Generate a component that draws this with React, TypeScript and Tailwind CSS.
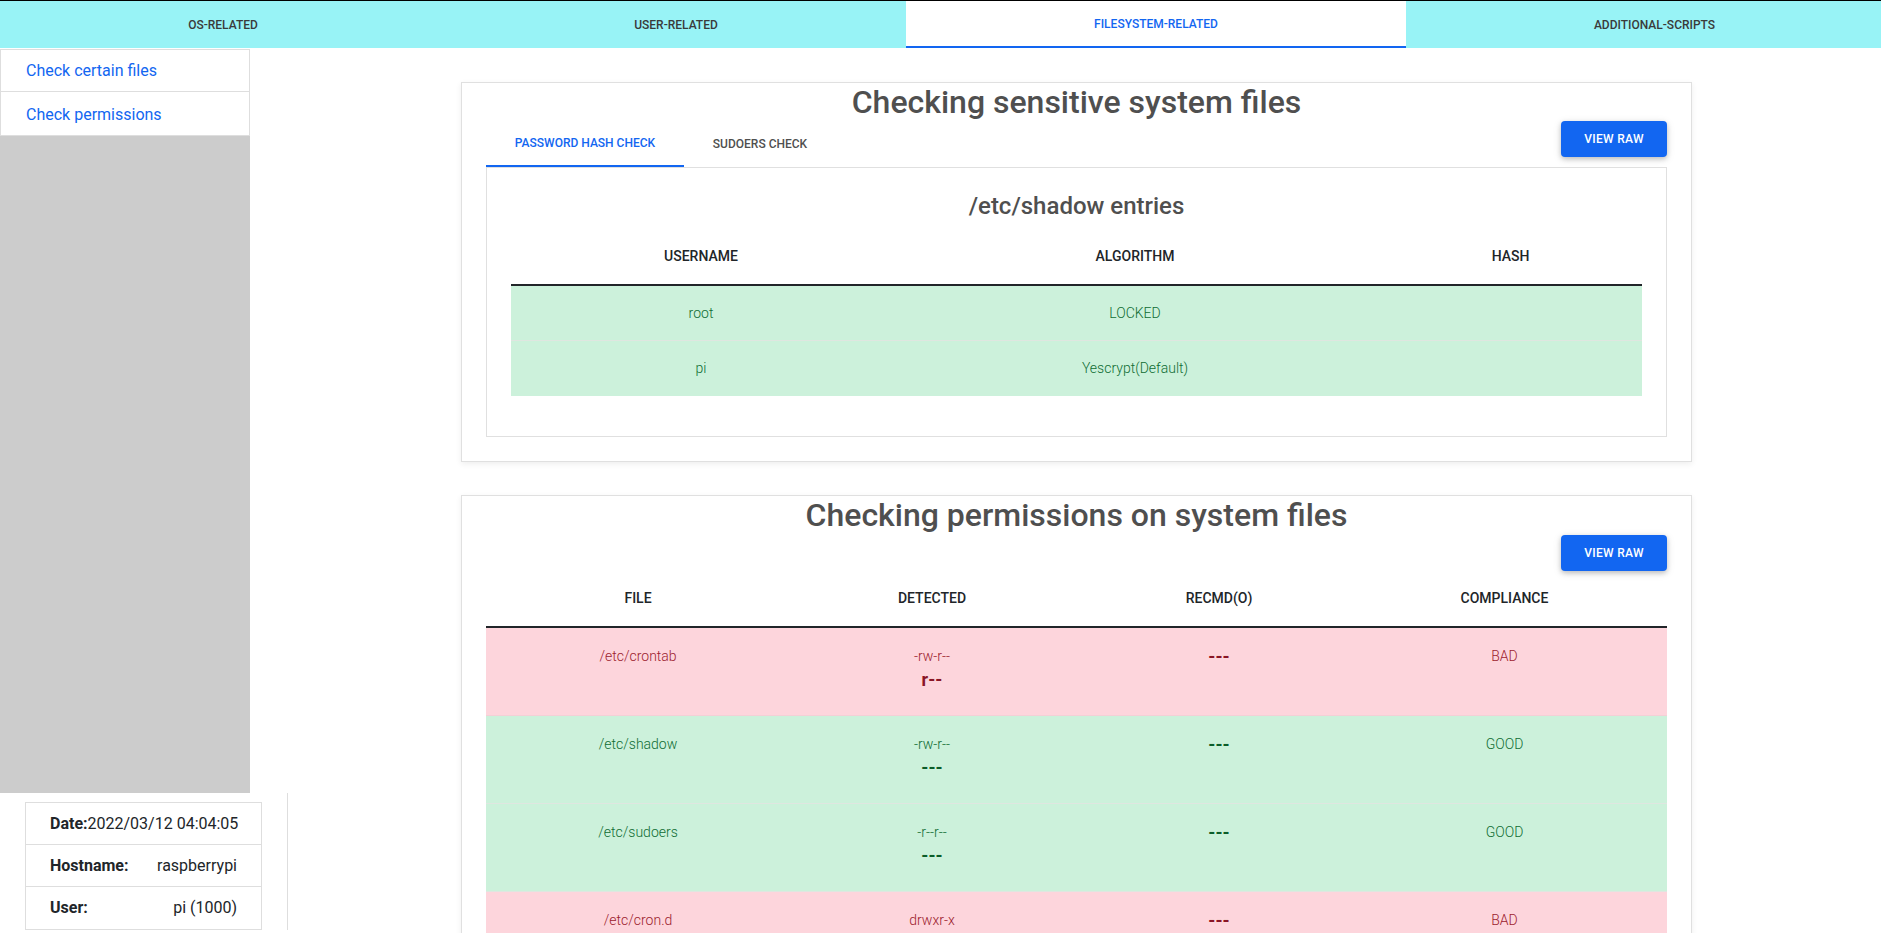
import React from 'react';

const navTabs = [
  { label: 'OS-RELATED', w: 'w-[446px]' },
  { label: 'USER-RELATED', w: 'w-[460px]' },
  { label: 'FILESYSTEM-RELATED', w: 'w-[500px]', active: true },
  { label: 'ADDITIONAL-SCRIPTS', w: 'flex-1 pl-[22px]' },
];

const shadowRows = [
  { user: 'root', algo: 'LOCKED', hash: '' },
  { user: 'pi', algo: 'Yescrypt(Default)', hash: '' },
];

const permRows = [
  { file: '/etc/crontab', detected: '-rw-r--', other: 'r--', recmd: '---', ok: false },
  { file: '/etc/shadow', detected: '-rw-r--', other: '---', recmd: '---', ok: true },
  { file: '/etc/sudoers', detected: '-r--r--', other: '---', recmd: '---', ok: true },
  { file: '/etc/cron.d', detected: 'drwxr-x', other: '', recmd: '---', ok: false },
];

function ViewRaw() {
  return (
    <button className="h-[36px] w-[106px] rounded-[4px] bg-[#1266f1] text-[12px] font-medium uppercase tracking-wide text-white shadow-[0_2px_5px_rgba(0,0,0,0.2),0_2px_10px_rgba(0,0,0,0.1)]">
      View raw
    </button>
  );
}

export default function App() {
  return (
    <div className="h-screen overflow-hidden bg-white font-['Roboto',sans-serif] text-[#4f4f4f]">
      {/* top nav */}
      <nav className="flex h-12 border-t border-black bg-[#98f3f6]">
        {navTabs.map((t) => (
          <div
            key={t.label}
            className={
              t.w +
              ' flex items-center justify-center text-[12px] font-medium uppercase ' +
              (t.active ? 'border-b-2 border-[#1266f1] bg-white text-[#1266f1]' : 'text-[#3a3a3a]')
            }
          >
            {t.label}
          </div>
        ))}
      </nav>

      <div className="flex">
        {/* left column */}
        <aside className="flex w-[288px] shrink-0 flex-col">
          <div className="mt-[1px] w-[250px] border border-[#dedede] bg-white">
            <div className="flex h-[42px] items-center border-b border-[#dedede] pl-[25px] text-[16px] text-[#1266f1]">
              Check certain files
            </div>
            <div className="flex h-[43px] items-center pl-[25px] pt-[2px] text-[16px] text-[#1266f1]">
              Check permissions
            </div>
          </div>
          <div className="h-[657px] w-[250px] bg-[#cccccc]" />
          <div className="border-r border-[#dedede] bg-white px-[25px] pt-[9px]">
            <div className="border border-[#dedede] text-[16px] text-[#212529]">
              <div className="flex h-[42px] items-center whitespace-nowrap border-b border-[#dedede] px-[24px]">
                <span className="font-bold">Date:</span>
                <span>2022/03/12 04:04:05</span>
              </div>
              <div className="flex h-[42px] items-center justify-between border-b border-[#dedede] px-[24px]">
                <span className="font-bold">Hostname:</span>
                <span>raspberrypi</span>
              </div>
              <div className="flex h-[42px] items-center justify-between px-[24px]">
                <span className="font-bold">User:</span>
                <span>pi (1000)</span>
              </div>
            </div>
          </div>
        </aside>

        {/* main */}
        <main className="ml-[173px] flex w-[1231px] flex-col gap-[33px] pt-[34px]">
          {/* card 1 */}
          <section className="border border-[#e0e0e0] bg-white px-[24px] pb-[24px] shadow-[0_2px_6px_rgba(0,0,0,0.07)]">
            <h2 className="text-center text-[32px] font-medium leading-[38px] text-[#4f4f4f]">
              Checking sensitive system files
            </h2>
            <div className="flex items-start justify-between">
              <div className="flex">
                <div className="flex h-[46px] w-[198px] items-center justify-center border-b-2 border-[#1266f1] text-[12px] font-medium uppercase text-[#1266f1]">
                  Password hash check
                </div>
                <div className="flex h-[46px] w-[152px] items-center justify-center text-[12px] font-medium uppercase text-[#4f4f4f]">
                  Sudoers check
                </div>
              </div>
              <ViewRaw />
            </div>
            <div className="border border-[#e0e0e0] px-[24px] pb-[40px] pt-[24px]">
              <h3 className="text-center text-[24px] font-medium leading-[29px] text-[#4f4f4f]">/etc/shadow entries</h3>
              <div className="mt-[13px]">
                <div className="flex h-[52px] items-end border-b-2 border-[#212529] pb-[20px] text-[14px] font-medium uppercase leading-[16px] text-[#212529]">
                  <div className="w-[380px] text-center">Username</div>
                  <div className="w-[488px] text-center">Algorithm</div>
                  <div className="flex-1 text-center">Hash</div>
                </div>
                {shadowRows.map((r, i) => (
                  <div
                    key={r.user}
                    className={
                      'flex h-[55px] items-center bg-[#ccf1db] text-[14px] font-light text-[#0f6d33] ' +
                      (i === 0 ? 'border-b border-[#dfe6e0]' : '')
                    }
                  >
                    <div className="w-[380px] text-center">{r.user}</div>
                    <div className="w-[488px] text-center">{r.algo}</div>
                    <div className="flex-1 text-center">{r.hash}</div>
                  </div>
                ))}
              </div>
            </div>
          </section>

          {/* card 2 */}
          <section className="border border-[#e0e0e0] bg-white px-[24px] shadow-[0_2px_6px_rgba(0,0,0,0.07)]">
            <h2 className="text-center text-[32px] font-medium leading-[38px] text-[#4f4f4f]">
              Checking permissions on system files
            </h2>
            <div className="mt-[1px] flex justify-end">
              <ViewRaw />
            </div>
            <div className="mt-[5px]">
              <div className="flex h-[52px] items-end border-b-2 border-[#212529] pb-[20px] text-[14px] font-medium uppercase leading-[16px] text-[#212529]">
                <div className="w-[304px] text-center">File</div>
                <div className="w-[284px] text-center">Detected</div>
                <div className="w-[290px] text-center">Recmd(o)</div>
                <div className="flex-1 pr-[22px] text-center">Compliance</div>
              </div>
              {permRows.map((r) => (
                <div
                  key={r.file}
                  className={
                    'flex h-[88px] items-start border-b pt-[18px] text-[14px] font-light ' +
                    (r.ok
                      ? 'border-[#dfe6e0] bg-[#ccf1db] text-[#0f6d33]'
                      : 'border-[#f3d0d6] bg-[#fdd5dc] text-[#9c1c2e]')
                  }
                >
                  <div className="w-[304px] text-center leading-[21px]">{r.file}</div>
                  <div className="flex w-[284px] flex-col items-center">
                    <span className="leading-[21px]">{r.detected}</span>
                    {r.other && (
                      <span
                        className={
                          'text-[18px] font-bold leading-[26px] ' + (r.ok ? 'text-[#0b5d2a]' : 'text-[#8a1526]')
                        }
                      >
                        {r.other}
                      </span>
                    )}
                  </div>
                  <div
                    className={
                      'w-[290px] text-center text-[18px] font-bold leading-[21px] ' +
                      (r.ok ? 'text-[#0b5d2a]' : 'text-[#8a1526]')
                    }
                  >
                    {r.recmd}
                  </div>
                  <div className="flex-1 pr-[22px] text-center leading-[21px]">{r.ok ? 'GOOD' : 'BAD'}</div>
                </div>
              ))}
            </div>
          </section>
        </main>
      </div>
    </div>
  );
}
